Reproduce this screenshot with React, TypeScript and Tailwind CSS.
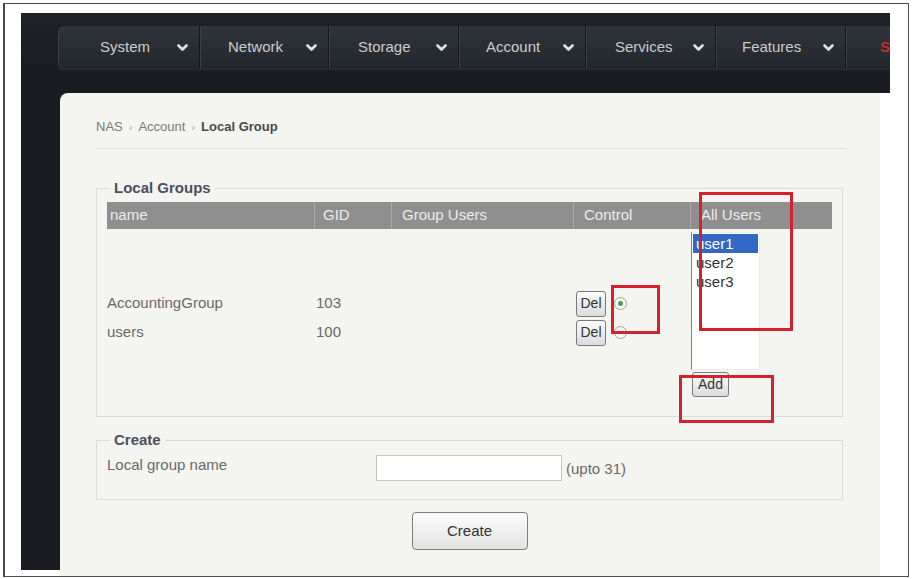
import React from "react";

const navItems = [
  { label: "System", w: 142, pl: 42 },
  { label: "Network", w: 129, pl: 28 },
  { label: "Storage", w: 130, pl: 29 },
  { label: "Account", w: 127, pl: 27 },
  { label: "Services", w: 130, pl: 29 },
  { label: "Features", w: 130, pl: 26 },
];

function Chevron() {
  return (
    <svg width="11" height="8" viewBox="0 0 11 8" className="shrink-0">
      <polyline points="1.5,1.5 5.5,5.5 9.5,1.5" fill="none" stroke="#dfe1e3" strokeWidth="2.6" strokeLinecap="round" strokeLinejoin="round" />
    </svg>
  );
}

function NavButton({ label, w, pl, first }: { label: string; w: number; pl: number; first?: boolean }) {
  return (
    <div
      className={`flex items-center h-full shrink-0 bg-gradient-to-b from-[#30353b] to-[#23272c] border-r border-r-[#15171a] shadow-[inset_1px_0_0_#3b4047] ${first ? "rounded-l-[7px]" : ""}`}
      style={{ width: w, paddingLeft: pl }}
    >
      <span className="text-[15px] text-[#c9cbcd]">{label}</span>
      <span className="ml-auto mr-[11px]">
        <Chevron />
      </span>
    </div>
  );
}

function DelButton() {
  return (
    <div className="w-[30px] h-[26px] border border-[#7a7a7a] rounded-[3px] bg-gradient-to-b from-[#fbfbfb] to-[#dcdcdc] flex items-center justify-center text-[14px] text-[#333]">
      Del
    </div>
  );
}

export default function App() {
  return (
    <div className="w-[912px] h-[579px] bg-white relative overflow-hidden pl-[3px] pt-[3px] font-['Liberation_Sans',Arial,sans-serif]">
      <div className="w-[906px] h-[574px] border border-[#4a4a4a] border-l-2 overflow-hidden pl-[16px] pt-[9px]">
        {/* header */}
        <div className="w-[869px] h-[80px] bg-gradient-to-b from-[#1f2127] to-[#191b1f] pt-[13px] pl-[37px] overflow-hidden">
          <div className="flex h-[43px] shadow-[0_1px_0_#2a2d33]">
            {navItems.map((n, i) => (
              <NavButton key={n.label} label={n.label} w={n.w} pl={n.pl} first={i === 0} />
            ))}
            <div className="flex items-center h-full shrink-0 w-[80px] pl-[34px] bg-gradient-to-b from-[#30353b] to-[#23272c] shadow-[inset_1px_0_0_#3b4047]">
              <span className="text-[15px] text-[#c8282e] font-bold">Shutdown</span>
            </div>
          </div>
        </div>
        {/* body row */}
        <div className="flex w-[859px] h-[477px] bg-[#1b1d22]">
          <div className="w-[39px] shrink-0" />
          <div className="w-[820px] h-[484px] bg-[#f4f4f0] rounded-tl-[8px] pl-[36px] pt-[26px]">
            <div className="h-[16px] flex items-center text-[13px] text-[#7a7a7a] leading-[16px]">
              <span>NAS</span>
              <span className="mx-[6px] text-[11px] text-[#aaa]">›</span>
              <span>Account</span>
              <span className="mx-[6px] text-[11px] text-[#aaa]">›</span>
              <span className="font-bold text-[#4a4a4a]">Local Group</span>
            </div>
            <div className="w-[750px] h-px bg-[#e2e2de] mt-[13px]" />

            {/* Local Groups fieldset */}
            <fieldset className="w-[747px] h-[238px] mt-[30px] border border-[#dcdcd7] px-[10px]">
              <legend className="ml-[3px] px-[4px] text-[15px] leading-[18px] font-bold text-[#4e4e5e]">Local Groups</legend>
              <div className="mt-[5px] flex h-[27px] bg-[#8f8f8f] text-[15px] text-[#ececec] items-center">
                <div className="w-[208px] h-full flex items-center pl-[3px] border-r border-r-[#a9a9a9]">name</div>
                <div className="w-[77px] h-full flex items-center pl-[8px] border-r border-r-[#a9a9a9]">GID</div>
                <div className="w-[182px] h-full flex items-center pl-[10px] border-r border-r-[#a9a9a9]">Group Users</div>
                <div className="w-[117px] h-full flex items-center pl-[10px] border-r border-r-[#a9a9a9]">Control</div>
                <div className="w-[141px] h-full flex items-center pl-[10px]">All Users</div>
              </div>
              <div className="flex">
                <div className="w-[584px] pt-[60px] text-[15px] text-[#6a6a6a]">
                  {[
                    { name: "AccountingGroup", gid: "103", checked: true },
                    { name: "users", gid: "100", checked: false },
                  ].map((r) => (
                    <div key={r.name} className="flex items-center h-[29px]">
                      <div className="w-[208px]">{r.name}</div>
                      <div className="w-[77px] pl-[1px]">{r.gid}</div>
                      <div className="w-[182px]" />
                      <div className="w-[117px] flex items-center pl-[2px]">
                        <DelButton />
                        {r.checked ? (
                          <span className="ml-[8px] w-[13px] h-[13px] rounded-full border border-[#8fae8f] flex items-center justify-center bg-[#f8f8f4]">
                            <span className="w-[5px] h-[5px] rounded-full bg-[#4f9a4f]" />
                          </span>
                        ) : (
                          <span className="ml-[8px] w-[13px] h-[13px] rounded-full border border-[#b59a9a] bg-[#f8f8f4]" />
                        )}
                      </div>
                    </div>
                  ))}
                </div>
                <div className="w-[141px]">
                  <div className="mt-[3px] w-[69px] h-[138px] bg-white border border-[#ebebeb] border-l-[#808080] pt-px text-[15px] leading-[19px] text-[#333]">
                    <div className="mx-px bg-[#3268c4] text-white pl-[3px]">user1</div>
                    <div className="pl-[4px]">user2</div>
                    <div className="pl-[4px]">user3</div>
                  </div>
                  <div className="mt-[2px] ml-px w-[37px] h-[25px] border border-[#7a7a7a] rounded-[3px] bg-gradient-to-b from-[#fbfbfb] to-[#dcdcdc] flex items-center justify-center text-[14px] text-[#333]">
                    Add
                  </div>
                </div>
              </div>
            </fieldset>

            {/* Create fieldset */}
            <fieldset className="w-[747px] mt-[14px] border border-[#dcdcd7] px-[10px] pb-[18px]">
              <legend className="ml-[3px] px-[4px] text-[15px] leading-[18px] font-bold text-[#4e4e5e]">Create</legend>
              <div className="flex items-center mt-[6px] text-[15px] text-[#6a6a6a]">
                <div className="w-[269px] -mt-[6px]">Local group name</div>
                <div className="w-[186px] h-[26px] bg-white border border-[#c4c4c4]" />
                <div className="ml-[4px] mt-[2px]">(upto 31)</div>
              </div>
            </fieldset>

            <div className="w-[747px] flex justify-center mt-[12px]">
              <div className="w-[116px] h-[38px] border border-[#7e7e7e] rounded-[4px] bg-gradient-to-b from-[#fdfdfd] to-[#e2e2e2] flex items-center justify-center text-[15px] text-[#333]">
                Create
              </div>
            </div>
          </div>
        </div>
      </div>

      {/* red annotation boxes */}
      <div className="absolute left-[699px] top-[192px] w-[94px] h-[139px] border-[3px] border-[#d1222d]" />
      <div className="absolute left-[611px] top-[285px] w-[49px] h-[49px] border-[3px] border-[#d1222d]" />
      <div className="absolute left-[679px] top-[375px] w-[95px] h-[48px] border-[3px] border-[#d1222d]" />
    </div>
  );
}
